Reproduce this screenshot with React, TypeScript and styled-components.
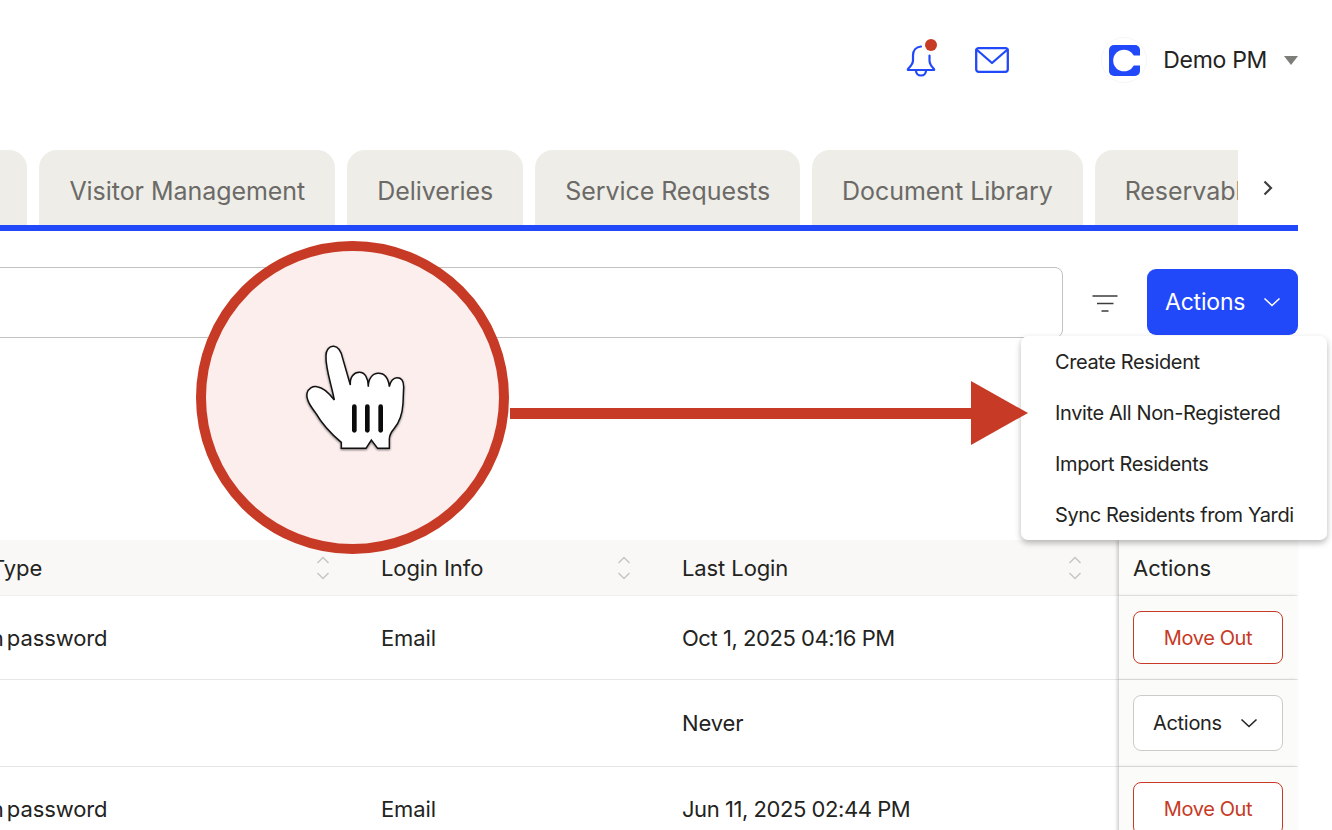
import styled, { createGlobalStyle } from "styled-components";

// 페이지 기본 스타일
const GlobalStyle = createGlobalStyle`
  html, body {
    margin: 0;
    padding: 0;
    background: #fff;
  }
  * {
    box-sizing: border-box;
  }
`;

const TABS = ["Residents", "Visitor Management", "Deliveries", "Service Requests", "Document Library", "Reservables"];
const MENU = ["Create Resident", "Invite All Non-Registered", "Import Residents", "Sync Residents from Yardi"];

const SortIcon = () => (
  <SortSvg width="14" height="24" viewBox="0 0 14 24">
    <path d="M1.5 7 7 1.5 12.5 7M1.5 17 7 22.5 12.5 17" />
  </SortSvg>
);

const Chevron = () => (
  <ChevronSvg width="18" height="10" viewBox="0 0 18 10">
    <path d="M1.5 1.5 9 8.5l7.5-7" />
  </ChevronSvg>
);

export default function App() {
  return (
    <Page>
      <GlobalStyle />
      <Header>
        <BellLink>
          <svg width="30" height="34" viewBox="0 0 30 34" fill="none" stroke="#2249f9" strokeWidth="2.200" strokeLinecap="round" strokeLinejoin="round">
            <path d="M15 3.500c-5 .5-8 4-8 9v5c0 3-2 5.500-5 8.500-.4.6-.2 1 .5 1h25c.7 0 .9-.4.500-1-3-3-4.500-5.500-4.500-8.500v-5" />
            <path d="M10 28c.3 3 2.500 4.500 5 4.500s4.700-1.500 5-4.500" />
          </svg>
          <NotificationDot />
        </BellLink>
        <IconLink>
          <svg width="34" height="26" viewBox="0 0 34 26" fill="none" stroke="#2249f9" strokeWidth="2.300" strokeLinejoin="round" strokeLinecap="round">
            <rect x="1.200" y="1.200" width="31.600" height="23.600" rx="2.500" />
            <path d="M1.500 2.500 17 16 32.500 2.500" />
          </svg>
        </IconLink>
        <Profile>
          <Avatar>
            <svg width="31" height="31" viewBox="0 0 31 31">
              <rect width="31" height="31" rx="5" fill="#2249f9" />
              <circle cx="15" cy="15.500" r="10.800" fill="#fff" />
              <rect x="15" y="10.500" width="16" height="10" fill="#fff" />
            </svg>
          </Avatar>
          <ProfileName>Demo PM</ProfileName>
          <Caret />
        </Profile>
      </Header>

      <TabBar>
        <TabScroller>
          <TabList>
            {TABS.map((tab) => (
              <Tab key={tab}>{tab}</Tab>
            ))}
          </TabList>
        </TabScroller>
        <TabArrow>
          <svg width="12" height="16" viewBox="0 0 12 16" fill="none" stroke="#3f3f3c" strokeWidth="2.200">
            <path d="M2.500 1.500 9 8l-6.500 6.500" />
          </svg>
        </TabArrow>
      </TabBar>

      <Toolbar>
        <SearchBox />
        <FilterButton>
          <svg width="26" height="18" viewBox="0 0 26 18" stroke="#3c3c3a" strokeWidth="1.600">
            <path d="M0.500 2h25M5 9.500h16.500M9.500 17h7" />
          </svg>
        </FilterButton>
        <PrimaryButton>
          Actions
          <PrimaryChevron>
            <Chevron />
          </PrimaryChevron>
        </PrimaryButton>
        <Menu>
          {MENU.map((item) => (
            <MenuItem key={item}>{item}</MenuItem>
          ))}
        </Menu>
      </Toolbar>

      <Table>
        <HeadCell>
          <ClippedHead>Login Type</ClippedHead>
          <SortIcon />
        </HeadCell>
        <HeadCell>
          Login Info
          <SortIcon />
        </HeadCell>
        <HeadCell $wide>
          Last Login
          <SortIcon />
        </HeadCell>
        <ActionsHead>Actions</ActionsHead>

        <Cell><ClippedText>Admin password</ClippedText></Cell>
        <Cell>Email</Cell>
        <Cell $date>Oct 1, 2025 04:16 PM</Cell>
        <ActionsCell><MoveOutButton>Move Out</MoveOutButton></ActionsCell>

        <Cell />
        <Cell />
        <Cell>Never</Cell>
        <ActionsCell>
          <RowActionsButton>
            Actions
            <Chevron />
          </RowActionsButton>
        </ActionsCell>

        <Cell><ClippedText>Admin password</ClippedText></Cell>
        <Cell>Email</Cell>
        <Cell $date>Jun 11, 2025 02:44 PM</Cell>
        <ActionsCell><MoveOutButton>Move Out</MoveOutButton></ActionsCell>
      </Table>

      {/* 화면 위에 얹힌 안내 표시 */}
      <Callout>
        <HandSvg width="130" height="125" viewBox="0 0 390 375">
          <path d="M105 62C105 45 115 33 128 34c14 1 22 14 27 36l23 80c-2-25 12-38 27-38 17 0 27 18 27 43 0-25 13-40 30-40 20 0 30 15 33 40 3-17 13-27 23-27 14 0 20 12 20 27l-2 50c-2 35-11 57-26 75-10 12-15 20-15 32v28h-35l-19-25-16 25h-74v-18c-26-22-56-52-76-87-15-20-30-40-27-60 4-15 17-22 30-20 17 2 37 20 52 40-8-45-27-95-25-133z" />
          <rect x="183" y="208" width="14" height="85" rx="7" />
          <rect x="222" y="208" width="14" height="85" rx="7" />
          <rect x="262" y="208" width="14" height="85" rx="7" />
        </HandSvg>
      </Callout>
      <CalloutArrow>
        <ArrowLine />
        <ArrowHead />
      </CalloutArrow>
    </Page>
  );
}

// 스타일 정의
const FONT = `"Inter", "Liberation Sans", Arial, sans-serif`;

const Page = styled.div`
  position: relative;
  width: 1332px;
  height: 830px;
  overflow: hidden;
  padding-right: 34px;
  background: #fff;
  color: #232321;
  font-family: ${FONT};
  font-size: 22px;
  letter-spacing: -0.1px;
`;

const Header = styled.header`
  display: flex;
  align-items: center;
  justify-content: flex-end;
  height: 120px;
  margin-bottom: 30px;
`;

const IconLink = styled.div`
  position: relative;
  display: flex;
`;

const BellLink = styled(IconLink)`
  margin-right: 39px;
`;

const NotificationDot = styled.span`
  position: absolute;
  top: -4px;
  right: -1px;
  width: 12px;
  height: 12px;
  border-radius: 50%;
  background: #c73a25;
`;

const Profile = styled.div`
  display: flex;
  align-items: center;
  margin-left: 92px;
`;

const Avatar = styled.div`
  display: flex;
  align-items: center;
  justify-content: center;
  width: 46px;
  height: 46px;
  border-radius: 50%;
  border: 1px solid #f6f6f6;
`;

const ProfileName = styled.span`
  margin-left: 16px;
  font-size: 23px;
  letter-spacing: -0.3px;
`;

const Caret = styled.span`
  width: 0;
  height: 0;
  margin-left: 17px;
  border-left: 7.5px solid transparent;
  border-right: 7.5px solid transparent;
  border-top: 9px solid #7d7d7a;
`;

const TabBar = styled.div`
  display: flex;
  height: 81px;
  border-bottom: 6px solid #2249f9;
`;

const TabScroller = styled.div`
  width: 1238px;
  overflow: hidden;
`;

const TabList = styled.div`
  display: flex;
  gap: 12px;
  width: max-content;
  margin-left: -147.5px;
`;

const Tab = styled.div`
  height: 75px;
  padding: 26px 30px 0;
  border-radius: 18px 18px 0 0;
  background: #eeede8;
  color: #6b6a66;
  font-size: 25px;
  letter-spacing: -0.05px;
  line-height: 30px;
  white-space: nowrap;
`;

const TabArrow = styled.div`
  display: flex;
  justify-content: center;
  padding-top: 30px;
  width: 60px;
`;

const Toolbar = styled.div`
  position: relative;
  display: flex;
  align-items: center;
  height: 71px;
  margin-top: 36px;
`;

const SearchBox = styled.div`
  width: 1083px;
  height: 71px;
  margin-left: -20px;
  border: 1px solid #c2c2c0;
  border-radius: 8px;
`;

const FilterButton = styled.div`
  display: flex;
  justify-content: center;
  width: 84px;
`;

const PrimaryButton = styled.div`
  display: flex;
  align-items: center;
  width: 151px;
  height: 66px;
  margin-bottom: 2px;
  padding-left: 18px;
  border-radius: 9px;
  background: #2249f9;
  color: #fff;
  font-size: 23px;
  letter-spacing: -0.2px;
`;

const PrimaryChevron = styled.span`
  display: flex;
  margin-left: 18px;
  color: #fff;
`;

const Menu = styled.div`
  position: absolute;
  top: 69px;
  right: -29px;
  z-index: 2;
  width: 306px;
  height: 204px;
  padding-top: 2px;
  border-radius: 7px;
  background: #fff;
  box-shadow: 0 3px 6px rgba(0, 0, 0, 0.28);
`;

const MenuItem = styled.div`
  height: 51px;
  padding-left: 34px;
  font-size: 20px;
  letter-spacing: -0.38px;
  line-height: 49px;
  white-space: nowrap;
`;

const Table = styled.div`
  display: grid;
  grid-template-columns: 351px 301px 467px 179px;
  margin-top: 202px;
`;

const HeadCell = styled.div<{ $wide?: boolean }>`
  display: flex;
  align-items: center;
  justify-content: space-between;
  height: 56px;
  padding: 0 ${(p) => (p.$wide ? 37 : 21)}px 0 30px;
  border-bottom: 1px solid #eeeeec;
  background: #f9f8f6;
`;

const ClippedHead = styled.span`
  margin-left: -102px;
`;

const ClippedText = styled.span`
  margin-left: -92px;
  word-spacing: -3px;
  white-space: nowrap;
`;

const Cell = styled.div<{ $date?: boolean }>`
  display: flex;
  align-items: center;
  padding-left: 30px;
  border-bottom: 1px solid #e6e6e4;
  letter-spacing: ${(p) => (p.$date ? "-0.45px" : "-0.1px")};
`;

const ActionsHead = styled.div`
  display: flex;
  align-items: center;
  height: 56px;
  padding-left: 14px;
  border-bottom: 1px solid #eeeeec;
  background: #fbfbfa;
  letter-spacing: 0;
  box-shadow: -2px 0 3px rgba(0, 0, 0, 0.18);
`;

const ActionsCell = styled.div`
  padding: 15px 15px 15px 14px;
  border-bottom: 1px solid #e6e6e4;
  background: #fbfbfa;
  box-shadow: -2px 0 3px rgba(0, 0, 0, 0.18);
`;

const MoveOutButton = styled.div`
  display: flex;
  align-items: center;
  justify-content: center;
  height: 53px;
  border: 1px solid #c73a25;
  border-radius: 8px;
  background: #fff;
  color: #c73a25;
  font-size: 20px;
  letter-spacing: -0.4px;
`;

const RowActionsButton = styled.div`
  display: flex;
  align-items: center;
  justify-content: space-between;
  height: 56px;
  padding: 0 24px 0 19px;
  border: 1px solid #cbcbc9;
  border-radius: 8px;
  background: #fff;
  font-size: 20px;
  letter-spacing: -0.3px;
`;

const ChevronSvg = styled.svg`
  fill: none;
  stroke: currentColor;
  stroke-width: 1.600;
`;

const SortSvg = styled.svg`
  fill: none;
  stroke: #c6c6c2;
  stroke-width: 1.500;
`;

const Callout = styled.div`
  position: absolute;
  top: 241px;
  left: 196px;
  z-index: 3;
  display: flex;
  align-items: center;
  justify-content: center;
  width: 313px;
  height: 313px;
  padding-left: 6px;
  border: 10px solid #c73a25;
  border-radius: 50%;
  background: #fceeed;
`;

const HandSvg = styled.svg`
  filter: drop-shadow(0 1px 1px rgba(0, 0, 0, 0.55));
  path {
    fill: #fff;
    stroke: #111;
    stroke-width: 4.500;
  }
  rect {
    fill: #0c0c0c;
  }
`;

const CalloutArrow = styled.div`
  position: absolute;
  top: 381px;
  left: 510px;
  z-index: 3;
  display: flex;
  align-items: center;
`;

const ArrowLine = styled.div`
  width: 461px;
  height: 11px;
  background: #c73a25;
`;

const ArrowHead = styled.div`
  width: 0;
  height: 0;
  border-top: 32px solid transparent;
  border-bottom: 32px solid transparent;
  border-left: 57px solid #c73a25;
`;
